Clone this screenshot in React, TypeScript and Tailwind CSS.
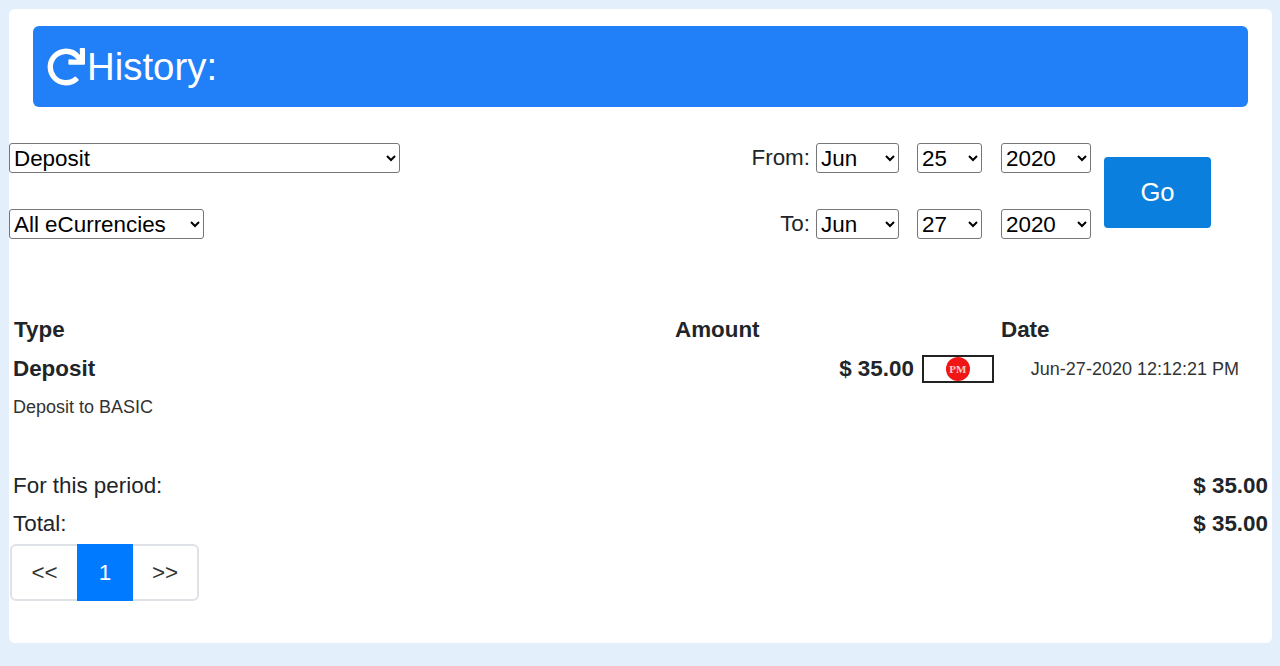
import React from "react";
import { FaRedo } from "react-icons/fa";

const sel = "h-[30px] bg-white border border-[#767676] rounded-[3px] text-[22.4px] text-black [font-family:'Liberation_Sans',Arial,sans-serif]";

function Sel({ v, w }: { v: string; w: string }) {
  return (
    <select className={`${sel} ${w}`} defaultValue={v}>
      <option>{v}</option>
    </select>
  );
}

function DateRow({ label, day }: { label: string; day: string }) {
  return (
    <div className="flex items-center h-[30px]">
      <span className="text-[22.4px] text-[#212529] mr-[6px]">{label}</span>
      <Sel v="Jun" w="w-[83px]" />
      <Sel v={day} w="w-[65px] ml-[18px]" />
      <Sel v="2020" w="w-[90px] ml-[19px]" />
    </div>
  );
}

export default function App() {
  return (
    <div className="h-[666px] bg-[#e3effb] pt-[9px] pl-[9px] pr-[8px] pb-[23px] text-[#212529] [font-family:'Liberation_Sans',Arial,sans-serif]">
      <div className="h-full bg-white rounded-[6px] pt-[17px] flex flex-col">
        <div className="mx-[24px] h-[81px] bg-[#2180f7] rounded-[6px] flex items-center pl-[14px] text-white text-[38.4px]">
          <FaRedo className="w-[38px] h-[38px] mr-[2px]" />
          <span>History:</span>
        </div>

        <div className="flex mt-[36px] items-center">
          <div className="flex flex-col items-start gap-[36px]">
            <Sel v="Deposit" w="w-[391px]" />
            <Sel v="All eCurrencies" w="w-[195px]" />
          </div>
          <div className="ml-auto flex flex-col items-end gap-[36px]">
            <DateRow label="From:" day="25" />
            <DateRow label="To:" day="27" />
          </div>
          <button className="ml-[13px] mr-[61px] mt-[3px] w-[107px] h-[71px] bg-[#0b7fde] rounded-[4px] text-white text-[25.6px]">
            Go
          </button>
        </div>

        <div className="mt-[75px] h-[32px] flex items-center font-bold text-[22.4px]">
          <span className="ml-[5px] w-[661px]">Type</span>
          <span className="w-[326px]">Amount</span>
          <span>Date</span>
        </div>

        <div className="mt-[7px] h-[32px] flex items-center">
          <span className="ml-[4px] font-bold text-[22.4px]">Deposit</span>
          <span className="ml-auto font-bold text-[22.4px]">$ 35.00</span>
          <span className="ml-[8px] w-[72px] h-[28px] border-2 border-[#222] flex items-center justify-center">
            <span className="w-[24px] h-[24px] rounded-full bg-[#f01616] text-[#f6c9c9] text-[11px] font-bold flex items-center justify-center [font-family:'Liberation_Serif',serif]">
              PM
            </span>
          </span>
          <span className="ml-[37px] mr-[33px] text-[18px] text-[#333]">Jun-27-2020 12:12:21 PM</span>
        </div>

        <div className="ml-[4px] mt-[10px] text-[18px] leading-[24px] text-[#333]">Deposit to BASIC</div>

        <div className="mt-[48px] h-[38px] flex items-center justify-between ml-[4px] mr-[4px] text-[22.4px]">
          <span>For this period:</span>
          <span className="font-bold">$ 35.00</span>
        </div>
        <div className="h-[38px] flex items-center justify-between ml-[4px] mr-[4px] text-[22.4px]">
          <span>Total:</span>
          <span className="font-bold">$ 35.00</span>
        </div>

        <div className="ml-[1px] mt-[1px] w-[189px] h-[57px] border-2 border-[#dee2e6] rounded-[6px] flex text-[22.4px] text-[#333]">
          <span className="w-[65px] flex items-center justify-center">&lt;&lt;</span>
          <span className="w-[56px] -my-[2px] bg-[#007bff] text-white flex items-center justify-center">1</span>
          <span className="w-[64px] flex items-center justify-center">&gt;&gt;</span>
        </div>
      </div>
    </div>
  );
}
